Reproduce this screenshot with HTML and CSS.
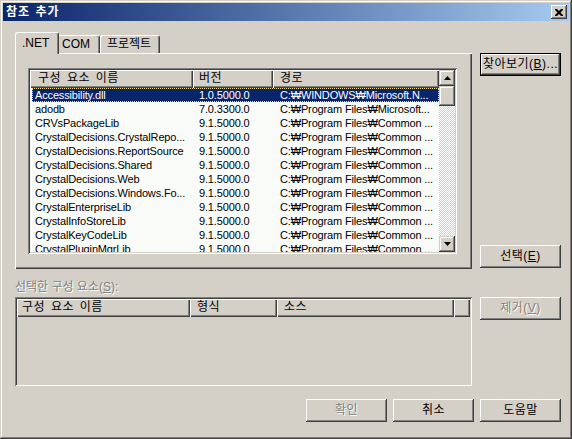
FILE: index.html
```html
<!DOCTYPE html>
<html lang="ko">
<head>
<meta charset="utf-8">
<title>참조 추가</title>
<link rel="stylesheet" href="styles.css">
</head>
<body>
<div class="window">
  <div class="titlebar">
    <span class="title">참조 추가</span>
    <button class="closebtn" aria-label="닫기">
      <svg width="8" height="7" viewBox="0 0 8 7"><path d="M0 0h2l2 2 2-2h2v1l-2.5 2.5L8 6v1H6L4 5 2 7H0V6l2.5-2.5L0 1z" fill="#000"/></svg>
    </button>
  </div>
  <div class="main">
    <div class="left">
      <div class="tabs">
        <div class="tab sel">.NET</div>
        <div class="tab com">COM</div>
        <div class="tab proj">프로젝트</div>
      </div>
      <div class="panel">
        <div class="listbox">
          <div class="lb-head">
            <div class="hcell c1">구성 요소 이름</div>
            <div class="hcell c2">버전</div>
            <div class="hcell c3">경로</div>
          </div>
          <div class="lb-body">
            <div class="rows">
              <div class="row selected"><span class="d1">Accessibility.dll</span><span class="d2">1.0.5000.0</span><span class="d3">C:₩WINDOWS₩Microsoft.N...</span></div>
              <div class="row"><span class="d1">adodb</span><span class="d2">7.0.3300.0</span><span class="d3">C:₩Program Files₩Microsoft...</span></div>
              <div class="row"><span class="d1">CRVsPackageLib</span><span class="d2">9.1.5000.0</span><span class="d3">C:₩Program Files₩Common ...</span></div>
              <div class="row"><span class="d1">CrystalDecisions.CrystalRepo...</span><span class="d2">9.1.5000.0</span><span class="d3">C:₩Program Files₩Common ...</span></div>
              <div class="row"><span class="d1">CrystalDecisions.ReportSource</span><span class="d2">9.1.5000.0</span><span class="d3">C:₩Program Files₩Common ...</span></div>
              <div class="row"><span class="d1">CrystalDecisions.Shared</span><span class="d2">9.1.5000.0</span><span class="d3">C:₩Program Files₩Common ...</span></div>
              <div class="row"><span class="d1">CrystalDecisions.Web</span><span class="d2">9.1.5000.0</span><span class="d3">C:₩Program Files₩Common ...</span></div>
              <div class="row"><span class="d1">CrystalDecisions.Windows.Fo...</span><span class="d2">9.1.5000.0</span><span class="d3">C:₩Program Files₩Common ...</span></div>
              <div class="row"><span class="d1">CrystalEnterpriseLib</span><span class="d2">9.1.5000.0</span><span class="d3">C:₩Program Files₩Common ...</span></div>
              <div class="row"><span class="d1">CrystalInfoStoreLib</span><span class="d2">9.1.5000.0</span><span class="d3">C:₩Program Files₩Common ...</span></div>
              <div class="row"><span class="d1">CrystalKeyCodeLib</span><span class="d2">9.1.5000.0</span><span class="d3">C:₩Program Files₩Common ...</span></div>
              <div class="row"><span class="d1">CrystalPluginMgrLib</span><span class="d2">9.1.5000.0</span><span class="d3">C:₩Program Files₩Common ...</span></div>
            </div>
            <div class="vscroll">
              <div class="sbtn"><svg width="7" height="4" viewBox="0 0 7 4"><path d="M3.5 0L7 4H0z" fill="#000"/></svg></div>
              <div class="thumb"></div>
              <div class="track"></div>
              <div class="sbtn"><svg width="7" height="4" viewBox="0 0 7 4"><path d="M0 0h7L3.5 4z" fill="#000"/></svg></div>
            </div>
          </div>
        </div>
      </div>
      <div class="label disabled">선택한 구성 요소(<u>S</u>):</div>
      <div class="list2">
        <div class="lb-head">
          <div class="hcell e1">구성 요소 이름</div>
          <div class="hcell e2">형식</div>
          <div class="hcell e3">소스</div>
          <div class="hcell e4"></div>
        </div>
      </div>
    </div>
    <div class="right">
      <button class="btn default browse">찾아보기(<u>B</u>)...</button>
      <button class="btn select">선택(<u>E</u>)</button>
      <button class="btn remove disabled">제거(<u>V</u>)</button>
    </div>
    <div class="bottom">
      <button class="btn disabled">확인</button>
      <button class="btn">취소</button>
      <button class="btn">도움말</button>
    </div>
  </div>
</div>
</body>
</html>
```
FILE: styles.css
```css
* { box-sizing: border-box; }
body {
  margin: 0;
  background: #d4d0c8;
  font-family: "Liberation Sans", "Noto Sans CJK KR", sans-serif;
  font-size: 12px;
  color: #000;
}
.window {
  width: 572px;
  height: 439px;
  padding: 3px;
  background: #d4d0c8;
  box-shadow: inset -1px -1px #404040, inset 1px 1px #d4d0c8, inset -2px -2px #808080, inset 2px 2px #fff;
}
.titlebar {
  height: 18px;
  background: linear-gradient(to right, #0a246a, #a6caf0);
  display: flex;
  align-items: center;
  justify-content: space-between;
  padding: 0 2px 0 3px;
}
.title {
  color: #fff;
  font-weight: bold;
  font-size: 12px;
  line-height: 14px;
  letter-spacing: 1px;
  word-spacing: 1px;
}
.closebtn {
  width: 16px;
  height: 14px;
  padding: 0;
  border: 0;
  background: #d4d0c8;
  box-shadow: inset -1px -1px #404040, inset 1px 1px #fff, inset -2px -2px #808080;
  display: flex;
  align-items: center;
  justify-content: center;
}
.main {
  display: grid;
  grid-template-columns: 457px 81px;
  column-gap: 8px;
  margin-top: 11px;
  padding-left: 12px;
}
.tabs {
  display: flex;
  align-items: flex-end;
  height: 21px;
}
.tab {
  height: 18px;
  background: #d4d0c8;
  border-top: 1px solid #fff;
  border-left: 1px solid #fff;
  border-right: 1px solid #404040;
  border-radius: 3px 3px 0 0;
  box-shadow: inset -1px 0 #808080;
  font-size: 12px;
  line-height: 16px;
  padding-left: 6px;
}
.tab.sel {
  width: 44px;
  height: 22px;
  margin-bottom: -1px;
  position: relative;
  z-index: 1;
  line-height: 20px;
}
.tab.com { width: 41px; padding-left: 3px; border-left: 0; border-radius: 0 3px 0 0; }
.tab.proj { width: 60px; padding-left: 6px; }
.panel {
  height: 216px;
  padding: 15px 0 0 13px;
  box-shadow: inset 1px 1px #fff, inset -1px -1px #404040, inset -2px -2px #808080;
}
.listbox {
  width: 429px;
  height: 186px;
  padding: 2px;
  background: #f8fbf8;
  box-shadow: inset 1px 1px #808080, inset -1px -1px #fff, inset 2px 2px #404040, inset -2px -2px #d4d0c8;
  position: relative;
}
.lb-head {
  display: flex;
  height: 18px;
}
.hcell {
  height: 18px;
  background: #d4d0c8;
  box-shadow: inset 1px 1px #fff, inset -1px -1px #404040, inset -2px -2px #808080;
  font-size: 12px;
  line-height: 17px;
  white-space: nowrap;
  overflow: hidden;
  word-spacing: 2px;
  letter-spacing: 0.5px;
}
.c1 { width: 163px; padding-left: 8px; }
.c2 { width: 80px; padding-left: 6px; }
.c3 { width: 166px; padding-left: 7px; }
.listbox .lb-head { width: 409px; }
.lb-body {
  display: flex;
  height: 164px;
}
.listbox .lb-body {
  position: absolute;
  top: 2px;
  right: 2px;
  left: 2px;
  height: 182px;
}
.rows {
  width: 409px;
  padding-top: 18px;
  overflow: hidden;
}
.row {
  display: flex;
  height: 14px;
  margin-left: 2px;
  width: 407px;
  font-size: 11px;
  line-height: 14px;
  letter-spacing: -0.15px;
  white-space: nowrap;
}
.row.selected {
  background: #0a246a;
  color: #fff;
  outline: 1px dotted #f4e28c;
  outline-offset: -1px;
}
.d1 { width: 161px; padding-left: 3px; overflow: hidden; }
.d2 { width: 80px; padding-left: 6px; }
.d3 { width: 166px; padding-left: 7px; overflow: hidden; }
.vscroll {
  width: 16px;
  display: flex;
  flex-direction: column;
}
.sbtn, .thumb {
  width: 16px;
  height: 16px;
  background: #d4d0c8;
  box-shadow: inset -1px -1px #404040, inset 1px 1px #d4d0c8, inset -2px -2px #808080, inset 2px 2px #fff;
  display: flex;
  align-items: center;
  justify-content: center;
}
.thumb { height: 20px; }
.track {
  flex: 1;
  background: repeating-conic-gradient(#fff 0% 25%, #d4d0c8 0% 50%) 0 0 / 2px 2px;
}
.label {
  margin-top: 11px;
  height: 14px;
  line-height: 14px;
  font-size: 12px;
}
.disabled {
  color: #808080;
  text-shadow: 1px 1px #fff;
}
.list2 {
  margin-top: 3px;
  width: 457px;
  height: 89px;
  padding: 2px;
  box-shadow: inset 1px 1px #808080, inset -1px -1px #fff, inset 2px 2px #404040, inset -2px -2px #d4d0c8;
}
.e1 { width: 173px; padding-left: 5px; }
.e2 { width: 87px; padding-left: 7px; }
.e3 { width: 177px; padding-left: 7px; }
.e4 { width: 16px; }
.right {
  display: flex;
  flex-direction: column;
}
.btn {
  width: 81px;
  height: 23px;
  padding: 0;
  border: 0;
  background: #d4d0c8;
  font-family: "Liberation Sans", "Noto Sans CJK KR", sans-serif;
  font-size: 12px;
  line-height: 21px;
  color: #000;
  box-shadow: inset -1px -1px #404040, inset 1px 1px #fff, inset -2px -2px #808080;
  letter-spacing: 0.5px;
}
.btn.disabled { color: #808080; text-shadow: 1px 1px #fff; }
.btn.default {
  box-shadow: inset 0 0 0 1px #000, inset -2px -2px #404040, inset 2px 2px #fff, inset -3px -3px #808080;
}
.browse { margin-top: 21px; }
.select { margin-top: 169px; }
.remove { margin-top: 29px; }
.bottom {
  grid-column: 1 / -1;
  display: flex;
  justify-content: flex-end;
  gap: 6px;
  margin-top: 13px;
}
```
